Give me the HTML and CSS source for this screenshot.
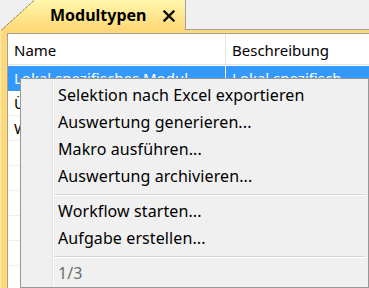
FILE: index.html
```html
<!DOCTYPE html>
<html lang="de">
<head>
  <meta charset="UTF-8">
  <title>Modultypen</title>
  <link rel="stylesheet" href="styles.css">
</head>
<body>
  <!-- Tab strip -->
  <div class="tabbar">
    <div class="tab">
      <svg class="tab-shape" width="185" height="30" viewBox="0 0 185 30">
        <defs>
          <linearGradient id="tabfill" x1="0" y1="0" x2="0" y2="1">
            <stop offset="0" stop-color="#fff7ab"/>
            <stop offset="1" stop-color="#ffd877"/>
          </linearGradient>
        </defs>
        <polygon points="1,30 34,0 185,0 185,30" fill="url(#tabfill)"/>
        <line x1="1" y1="30.5" x2="35" y2="-0.5" stroke="#4a4a4a" stroke-width="1" stroke-dasharray="1 1"/>
      </svg>
      <span class="tab-title">Modultypen</span>
      <svg class="tab-close" width="12" height="12" viewBox="0 0 12 12">
        <path d="M1.5 1.5 L10.5 10.5 M10.5 1.5 L1.5 10.5" stroke="#111" stroke-width="2.4" stroke-linecap="square"/>
      </svg>
    </div>
    <div class="tabbar-rest"></div>
  </div>

  <!-- Panel with list -->
  <div class="panel">
    <div class="list">
      <div class="list-head">
        <div class="cell">Name</div>
        <div class="cell">Beschreibung</div>
      </div>
      <div class="row selected">
        <div class="cell">Lokal spezifisches Modul</div>
        <div class="cell">Lokal spezifisch</div>
      </div>
      <div class="row">
        <div class="cell">Übergeordnet</div>
        <div class="cell">Übergeordnet</div>
      </div>
      <div class="row">
        <div class="cell">Workflow</div>
        <div class="cell">Workflow</div>
      </div>
      <div class="row"><div class="cell"></div><div class="cell"></div></div>
      <div class="row"><div class="cell"></div><div class="cell"></div></div>
      <div class="row"><div class="cell"></div><div class="cell"></div></div>
      <div class="row"><div class="cell"></div><div class="cell"></div></div>
      <div class="row"><div class="cell"></div><div class="cell"></div></div>
      <div class="row"><div class="cell"></div><div class="cell"></div></div>
    </div>
  </div>

  <!-- Context menu -->
  <div class="menu">
    <div class="menu-item">Selektion nach Excel exportieren</div>
    <div class="menu-item">Auswertung generieren...</div>
    <div class="menu-item">Makro ausführen...</div>
    <div class="menu-item">Auswertung archivieren...</div>
    <div class="menu-sep"></div>
    <div class="menu-item">Workflow starten...</div>
    <div class="menu-item">Aufgabe erstellen...</div>
    <div class="menu-sep"></div>
    <div class="menu-item disabled">1/3</div>
  </div>
</body>
</html>
```

FILE: styles.css
```css
html, body {
  margin: 0;
  padding: 0;
  height: 100%;
  overflow: hidden;
}

body {
  background: #f0f0f0;
  font-family: "Noto Sans", "Open Sans", sans-serif;
  font-size: 15px;
  color: #000;
  display: flex;
  flex-direction: column;
}

/* Tab strip */
.tabbar {
  display: flex;
  height: 30px;
  flex-shrink: 0;
}

.tab {
  position: relative;
  width: 185px;
  display: flex;
  align-items: center;
  padding-left: 50px;
  box-sizing: border-box;
}

.tab-shape {
  position: absolute;
  top: 0;
  left: 0;
}

.tab-title {
  position: relative;
  font-weight: bold;
  font-size: 16px;
}

.tab-close {
  position: relative;
  margin-left: 16px;
  margin-top: 1px;
}

.tabbar-rest {
  flex: 1;
  border-left: 1px solid #a0a0a0;
  border-bottom: 1px solid #a0a0a0;
}

/* Yellow frame */
.panel {
  flex: 1;
  background: #ffd877;
  border-left: 1px solid #f6e6b8;
  padding: 3px 0 0 6px;
  display: flex;
}

.list {
  flex: 1;
  background: #fff;
  border-left: 1px solid #a0a0a0;
  border-top: 1px solid #a0a0a0;
}

.list-head,
.row {
  display: grid;
  grid-template-columns: 217px 1fr;
}

.list-head {
  height: 30px;
  border-bottom: 1px solid #e3e3e3;
  margin-bottom: 1px;
}

.list-head .cell {
  display: flex;
  align-items: center;
  padding-left: 6px;
  padding-top: 2px;
}

.list-head .cell + .cell {
  border-left: 1px solid #e3e3e3;
}

.row {
  height: 24px;
  border-bottom: 1px solid #f0f0f0;
}

.row .cell {
  display: flex;
  align-items: center;
  padding-left: 6px;
  white-space: nowrap;
}

.row.selected {
  background: #3399ff;
  color: #fff;
  border-bottom-color: #3399ff;
}

.row.selected .cell + .cell {
  border-left: 1px solid #fff;
}

/* Context menu */
.menu {
  position: absolute;
  left: 20px;
  top: 78px;
  width: 349px;
  height: 210px;
  box-sizing: border-box;
  background: #f0f0f0;
  border: 1px solid #979797;
  padding: 3px 2px 0 2px;
  display: flex;
  flex-direction: column;
  font-size: 16px;
  letter-spacing: 0.1px;
}

/* icon gutter line */
.menu::before {
  content: "";
  position: absolute;
  top: 1px;
  bottom: 1px;
  left: 31px;
  width: 1px;
  background: #e2e3e3;
  box-shadow: 1px 0 0 #fff;
}

.menu-item {
  height: 27px;
  line-height: 27px;
  padding-left: 35px;
  white-space: nowrap;
}

.menu-item.disabled {
  color: #6d6d6d;
}

.menu-sep {
  height: 8px;
  margin-left: 31px;
  position: relative;
}

.menu-sep::after {
  content: "";
  position: absolute;
  left: 0;
  right: 0;
  top: 4px;
  height: 1px;
  background: #d7d7d7;
  box-shadow: 0 1px 0 #fff;
}
```
